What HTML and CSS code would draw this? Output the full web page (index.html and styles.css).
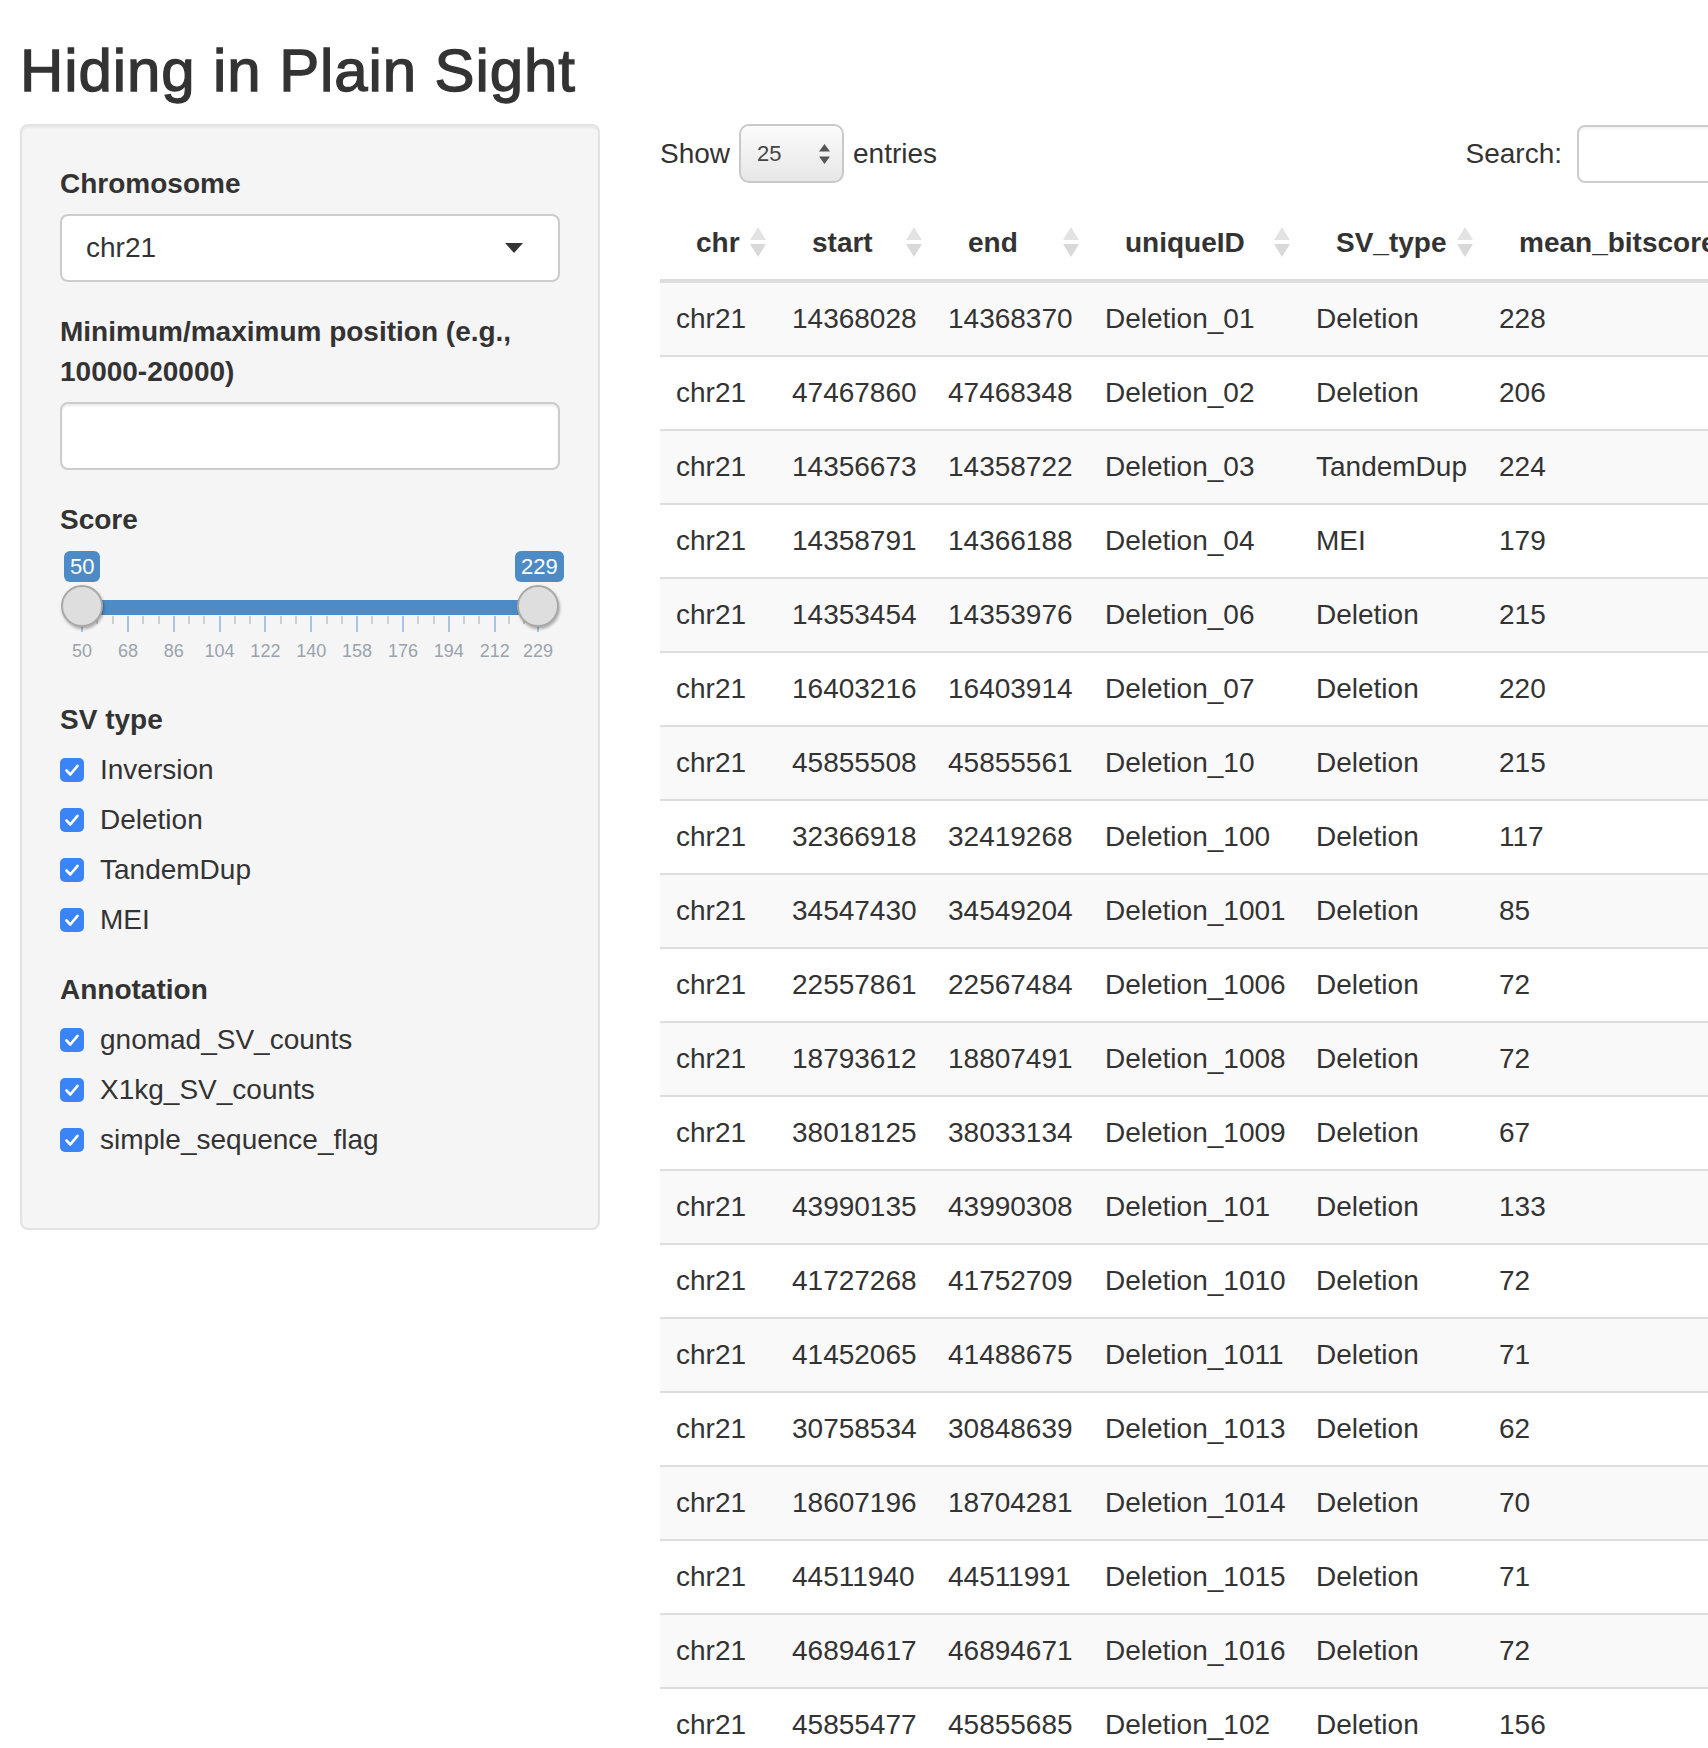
FILE: index.html
```html
<!DOCTYPE html>
<html lang="en">
<head>
<meta charset="utf-8">
<title>Hiding in Plain Sight</title>
<link rel="stylesheet" href="styles.css">
</head>
<body>
<div class="page">
  <h2 class="title">Hiding in Plain Sight</h2>
  <div class="layout">
    <aside class="well">
      <div class="form-group">
        <label class="ctl-label">Chromosome</label>
        <div class="select-box"><span>chr21</span><span class="caret"></span></div>
      </div>
      <div class="form-group">
        <label class="ctl-label">Minimum/maximum position (e.g., 10000-20000)</label>
        <div class="text-input"></div>
      </div>
      <div class="form-group">
        <label class="ctl-label">Score</label>
        <div class="slider">
          <div class="irs-bar"></div>
          <span class="irs-tick major" style="left:21px"></span>
          <span class="irs-tick" style="left:36.3px"></span>
          <span class="irs-tick" style="left:51.6px"></span>
          <span class="irs-tick major" style="left:66.9px"></span>
          <span class="irs-tick" style="left:82.2px"></span>
          <span class="irs-tick" style="left:97.5px"></span>
          <span class="irs-tick major" style="left:112.7px"></span>
          <span class="irs-tick" style="left:128px"></span>
          <span class="irs-tick" style="left:143.3px"></span>
          <span class="irs-tick major" style="left:158.6px"></span>
          <span class="irs-tick" style="left:173.9px"></span>
          <span class="irs-tick" style="left:189.1px"></span>
          <span class="irs-tick major" style="left:204.4px"></span>
          <span class="irs-tick" style="left:219.7px"></span>
          <span class="irs-tick" style="left:235px"></span>
          <span class="irs-tick major" style="left:250.3px"></span>
          <span class="irs-tick" style="left:265.6px"></span>
          <span class="irs-tick" style="left:280.8px"></span>
          <span class="irs-tick major" style="left:296.1px"></span>
          <span class="irs-tick" style="left:311.4px"></span>
          <span class="irs-tick" style="left:326.7px"></span>
          <span class="irs-tick major" style="left:342px"></span>
          <span class="irs-tick" style="left:357.3px"></span>
          <span class="irs-tick" style="left:372.5px"></span>
          <span class="irs-tick major" style="left:387.8px"></span>
          <span class="irs-tick" style="left:403.1px"></span>
          <span class="irs-tick" style="left:418.4px"></span>
          <span class="irs-tick major" style="left:433.7px"></span>
          <span class="irs-tick" style="left:448.1px"></span>
          <span class="irs-tick" style="left:462.5px"></span>
          <span class="irs-tick major" style="left:477px"></span>
          <span class="irs-num" style="left:22px">50</span>
          <span class="irs-num" style="left:67.9px">68</span>
          <span class="irs-num" style="left:113.7px">86</span>
          <span class="irs-num" style="left:159.6px">104</span>
          <span class="irs-num" style="left:205.4px">122</span>
          <span class="irs-num" style="left:251.3px">140</span>
          <span class="irs-num" style="left:297.1px">158</span>
          <span class="irs-num" style="left:343px">176</span>
          <span class="irs-num" style="left:388.8px">194</span>
          <span class="irs-num" style="left:434.7px">212</span>
          <span class="irs-num" style="left:478px">229</span>
          <span class="irs-handle h-from"></span>
          <span class="irs-handle h-to"></span>
          <span class="irs-badge irs-from">50</span>
          <span class="irs-badge irs-to">229</span>
        </div>
      </div>
      <div class="form-group">
        <label class="ctl-label">SV type</label>
        <div class="checks">
          <div class="check"><span class="box"><svg width="24" height="24" viewBox="0 0 24 24"><path d="M6.5 12.5 L10.3 16.5 L17.5 7.8" fill="none" stroke="#fff" stroke-width="2.6" stroke-linecap="round" stroke-linejoin="round"/></svg></span><span>Inversion</span></div>
          <div class="check"><span class="box"><svg width="24" height="24" viewBox="0 0 24 24"><path d="M6.5 12.5 L10.3 16.5 L17.5 7.8" fill="none" stroke="#fff" stroke-width="2.6" stroke-linecap="round" stroke-linejoin="round"/></svg></span><span>Deletion</span></div>
          <div class="check"><span class="box"><svg width="24" height="24" viewBox="0 0 24 24"><path d="M6.5 12.5 L10.3 16.5 L17.5 7.8" fill="none" stroke="#fff" stroke-width="2.6" stroke-linecap="round" stroke-linejoin="round"/></svg></span><span>TandemDup</span></div>
          <div class="check"><span class="box"><svg width="24" height="24" viewBox="0 0 24 24"><path d="M6.5 12.5 L10.3 16.5 L17.5 7.8" fill="none" stroke="#fff" stroke-width="2.6" stroke-linecap="round" stroke-linejoin="round"/></svg></span><span>MEI</span></div>
        </div>
      </div>
      <div class="form-group">
        <label class="ctl-label">Annotation</label>
        <div class="checks">
          <div class="check"><span class="box"><svg width="24" height="24" viewBox="0 0 24 24"><path d="M6.5 12.5 L10.3 16.5 L17.5 7.8" fill="none" stroke="#fff" stroke-width="2.6" stroke-linecap="round" stroke-linejoin="round"/></svg></span><span>gnomad_SV_counts</span></div>
          <div class="check"><span class="box"><svg width="24" height="24" viewBox="0 0 24 24"><path d="M6.5 12.5 L10.3 16.5 L17.5 7.8" fill="none" stroke="#fff" stroke-width="2.6" stroke-linecap="round" stroke-linejoin="round"/></svg></span><span>X1kg_SV_counts</span></div>
          <div class="check"><span class="box"><svg width="24" height="24" viewBox="0 0 24 24"><path d="M6.5 12.5 L10.3 16.5 L17.5 7.8" fill="none" stroke="#fff" stroke-width="2.6" stroke-linecap="round" stroke-linejoin="round"/></svg></span><span>simple_sequence_flag</span></div>
        </div>
      </div>
    </aside>

    <main class="main">
      <div class="dt-top">
        <div class="dt-length">
          <span>Show</span>
          <div class="len-select"><span>25</span><svg width="11" height="20" viewBox="0 0 11 20"><path d="M5.5 0 L11 7.5 L0 7.5Z M0 12.5 L11 12.5 L5.5 20Z" fill="#555"/></svg></div>
          <span>entries</span>
        </div>
        <div class="dt-filter">
          <span>Search:</span>
          <div class="search-input"></div>
        </div>
      </div>
      <table class="dt">
        <colgroup>
          <col class="c1"><col class="c2"><col class="c3"><col class="c4"><col class="c5"><col class="c6">
        </colgroup>
        <thead>
          <tr><th>chr</th><th>start</th><th>end</th><th>uniqueID</th><th>SV_type</th><th>mean_bitscore</th></tr>
        </thead>
        <tbody>
          <tr><td>chr21</td><td>14368028</td><td>14368370</td><td>Deletion_01</td><td>Deletion</td><td>228</td></tr>
          <tr><td>chr21</td><td>47467860</td><td>47468348</td><td>Deletion_02</td><td>Deletion</td><td>206</td></tr>
          <tr><td>chr21</td><td>14356673</td><td>14358722</td><td>Deletion_03</td><td>TandemDup</td><td>224</td></tr>
          <tr><td>chr21</td><td>14358791</td><td>14366188</td><td>Deletion_04</td><td>MEI</td><td>179</td></tr>
          <tr><td>chr21</td><td>14353454</td><td>14353976</td><td>Deletion_06</td><td>Deletion</td><td>215</td></tr>
          <tr><td>chr21</td><td>16403216</td><td>16403914</td><td>Deletion_07</td><td>Deletion</td><td>220</td></tr>
          <tr><td>chr21</td><td>45855508</td><td>45855561</td><td>Deletion_10</td><td>Deletion</td><td>215</td></tr>
          <tr><td>chr21</td><td>32366918</td><td>32419268</td><td>Deletion_100</td><td>Deletion</td><td>117</td></tr>
          <tr><td>chr21</td><td>34547430</td><td>34549204</td><td>Deletion_1001</td><td>Deletion</td><td>85</td></tr>
          <tr><td>chr21</td><td>22557861</td><td>22567484</td><td>Deletion_1006</td><td>Deletion</td><td>72</td></tr>
          <tr><td>chr21</td><td>18793612</td><td>18807491</td><td>Deletion_1008</td><td>Deletion</td><td>72</td></tr>
          <tr><td>chr21</td><td>38018125</td><td>38033134</td><td>Deletion_1009</td><td>Deletion</td><td>67</td></tr>
          <tr><td>chr21</td><td>43990135</td><td>43990308</td><td>Deletion_101</td><td>Deletion</td><td>133</td></tr>
          <tr><td>chr21</td><td>41727268</td><td>41752709</td><td>Deletion_1010</td><td>Deletion</td><td>72</td></tr>
          <tr><td>chr21</td><td>41452065</td><td>41488675</td><td>Deletion_1011</td><td>Deletion</td><td>71</td></tr>
          <tr><td>chr21</td><td>30758534</td><td>30848639</td><td>Deletion_1013</td><td>Deletion</td><td>62</td></tr>
          <tr><td>chr21</td><td>18607196</td><td>18704281</td><td>Deletion_1014</td><td>Deletion</td><td>70</td></tr>
          <tr><td>chr21</td><td>44511940</td><td>44511991</td><td>Deletion_1015</td><td>Deletion</td><td>71</td></tr>
          <tr><td>chr21</td><td>46894617</td><td>46894671</td><td>Deletion_1016</td><td>Deletion</td><td>72</td></tr>
          <tr><td>chr21</td><td>45855477</td><td>45855685</td><td>Deletion_102</td><td>Deletion</td><td>156</td></tr>
        </tbody>
      </table>
    </main>
  </div>
</div>
</body>
</html>
```

FILE: styles.css
```css
* { box-sizing: border-box; }

html, body {
  margin: 0;
  padding: 0;
  overflow: hidden;
  background: #fff;
}

body {
  width: 1708px;
  height: 1748px;
  font-family: "Liberation Sans", Arial, Helvetica, sans-serif;
  font-size: 28px;
  line-height: 40px;
  color: #333;
}

.page {
  padding: 0 20px;
}

.title {
  margin: 38px 0 20px;
  font-size: 60px;
  line-height: 66px;
  font-weight: 400;
  letter-spacing: 0.9px;
  -webkit-text-stroke: 1.3px #333;
  color: #333;
}

.layout {
  display: flex;
  align-items: flex-start;
  gap: 60px;
}

/* ---------- sidebar ---------- */
.well {
  flex: 0 0 580px;
  width: 580px;
  background: #f5f5f5;
  border: 2px solid #e3e3e3;
  border-radius: 8px;
  padding: 38px;
  box-shadow: inset 0 2px 2px rgba(0, 0, 0, 0.05);
}

.form-group {
  margin-bottom: 30px;
}

.ctl-label {
  display: block;
  font-weight: 700;
  margin-bottom: 10px;
}

.select-box {
  height: 68px;
  background: #fff;
  border: 2px solid #ccc;
  border-radius: 8px;
  display: flex;
  align-items: center;
  justify-content: space-between;
  padding: 0 35px 0 24px;
}

.caret {
  width: 0;
  height: 0;
  border-left: 9px solid transparent;
  border-right: 9px solid transparent;
  border-top: 10px solid #333;
}

.text-input {
  height: 68px;
  background: #fff;
  border: 2px solid #ccc;
  border-radius: 8px;
  box-shadow: inset 0 2px 2px rgba(0, 0, 0, 0.075);
}

/* slider */
.slider {
  position: relative;
  height: 120px;
}

.irs-bar {
  position: absolute;
  left: 22px;
  width: 456px;
  top: 50px;
  height: 15px;
  background: #4c8bc6;
}

.irs-tick {
  position: absolute;
  top: 66px;
  width: 2px;
  height: 8px;
  background: #cfcfcf;
}

.irs-tick.major {
  height: 16px;
  background: #a9c4e1;
}

.irs-num {
  position: absolute;
  top: 91px;
  font-size: 18px;
  line-height: 20px;
  color: #9aa3ad;
  transform: translateX(-50%);
}

.irs-handle {
  position: absolute;
  top: 35px;
  width: 42px;
  height: 42px;
  border-radius: 50%;
  background: #dedede;
  border: 2px solid #a9a9a9;
  box-shadow: 1px 2px 3px rgba(0, 0, 0, 0.3);
}

.h-from { left: 1px; }
.h-to { left: 457px; }

.irs-badge {
  position: absolute;
  top: 1px;
  height: 31px;
  padding: 0 6px;
  background: #4c8bc6;
  color: #fff;
  border-radius: 6px;
  font-size: 22px;
  line-height: 31px;
}

.irs-from { left: 4px; }
.irs-to { left: 455px; }

/* checkboxes */
.checks {
  display: flex;
  flex-direction: column;
  gap: 10px;
}

.check {
  display: flex;
  align-items: center;
  gap: 16px;
  height: 40px;
}

.box {
  width: 24px;
  height: 24px;
  border-radius: 5px;
  background: #3b84f5;
  display: flex;
  flex: 0 0 24px;
}

/* ---------- main ---------- */
.main {
  flex: 0 0 1217px;
  width: 1217px;
}

.dt-top {
  display: flex;
  align-items: center;
  height: 59px;
}

.dt-length {
  display: flex;
  align-items: center;
  gap: 9px;
}

.len-select {
  width: 105px;
  height: 59px;
  border: 2px solid #c9c9c9;
  border-radius: 10px;
  background: linear-gradient(#fbfbfb, #e7e7e7);
  box-shadow: inset 0 1px 0 #fff;
  display: flex;
  align-items: center;
  justify-content: space-between;
  padding: 0 12px 0 16px;
  font-size: 22px;
  color: #444;
}

.dt-filter {
  margin-left: auto;
  display: flex;
  align-items: center;
  gap: 15px;
}

.search-input {
  width: 300px;
  height: 58px;
  background: #fff;
  border: 2px solid #ccc;
  border-radius: 8px;
  box-shadow: inset 0 2px 2px rgba(0, 0, 0, 0.05);
}

.dt {
  margin-top: 24px;
  width: 1217px;
  table-layout: fixed;
  border-collapse: separate;
  border-spacing: 0;
}

.c1 { width: 116px; }
.c2 { width: 156px; }
.c3 { width: 157px; }
.c4 { width: 211px; }
.c5 { width: 183px; }
.c6 { width: 394px; }

.dt th {
  position: relative;
  text-align: left;
  font-weight: 700;
  padding: 16px 36px;
  line-height: 40px;
  border-bottom: 4px solid #ddd;
  white-space: nowrap;
  overflow: visible;
}

.dt th::before,
.dt th::after {
  content: "";
  position: absolute;
  right: 10px;
  width: 0;
  height: 0;
  border-left: 8px solid transparent;
  border-right: 8px solid transparent;
}

.dt th::before {
  top: 20px;
  border-bottom: 13px solid #e3e3e3;
}

.dt th::after {
  top: 37px;
  border-top: 13px solid #d9d9d9;
}

.dt td {
  padding: 16px;
  line-height: 40px;
  border-bottom: 2px solid #ddd;
  white-space: nowrap;
}

.dt tbody tr:nth-child(odd) td {
  background: #f9f9f9;
}
```
